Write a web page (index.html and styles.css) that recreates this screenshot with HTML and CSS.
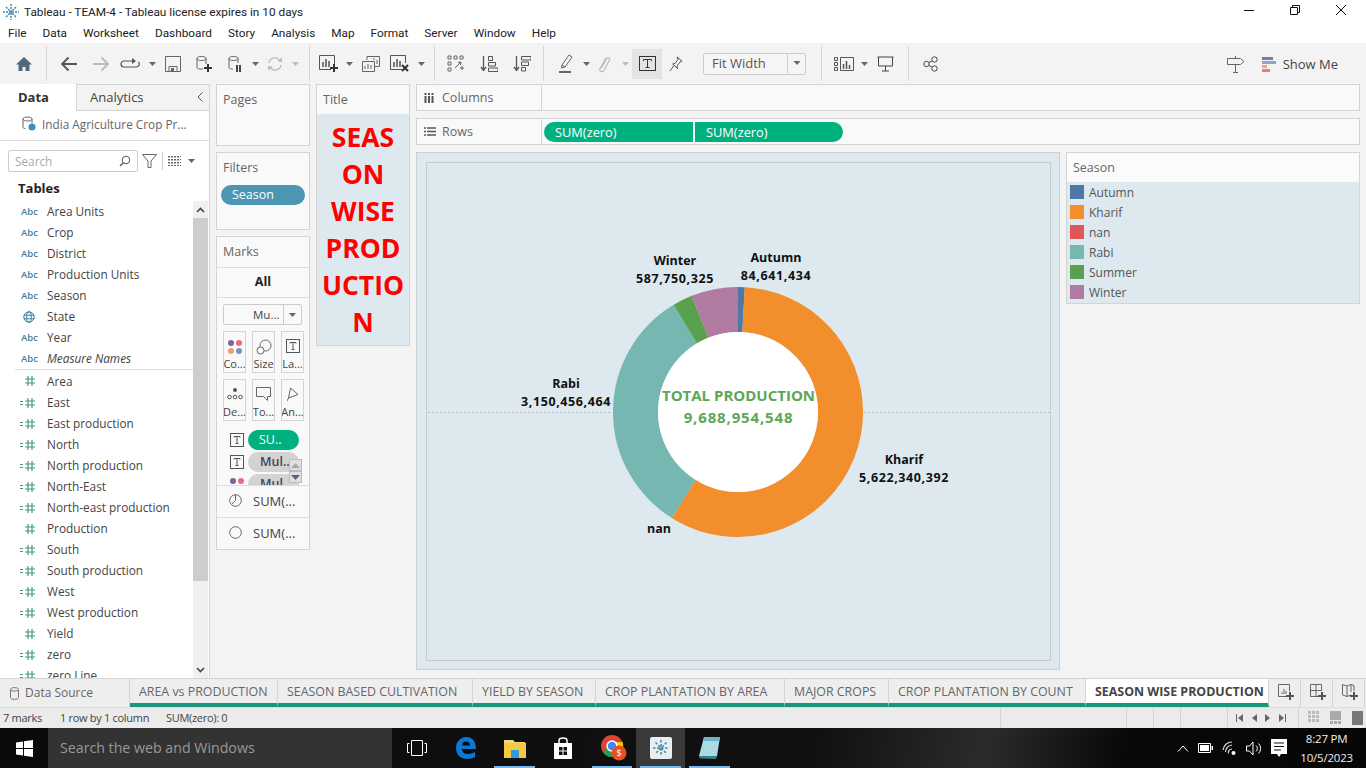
FILE: index.html
```html
<!DOCTYPE html>
<html lang="en">
<head>
  <meta charset="UTF-8" />
  <title>Tableau - TEAM-4</title>
  <link rel="stylesheet" href="styles.css">
</head>
<body>
  <!-- shared icons -->
  <svg class="defs" width="0" height="0">
    <symbol id="i-hash" viewBox="0 0 12 12"><path d="M4 1v10M8 1v10M1 4h10M1 8h10" fill="none" stroke="#3f9c78" stroke-width="1.2"/></symbol>
    <symbol id="i-calc" viewBox="0 0 16 12"><path d="M8 1v10M12 1v10M5 4h10M5 8h10M0 4.500h3M0 7.500h3" fill="none" stroke="#3f9c78" stroke-width="1.2"/></symbol>
    <symbol id="i-caret" viewBox="0 0 7 4"><path d="M0 0h7L3.500 4z" fill="#666"/></symbol>
    <symbol id="i-caret-off" viewBox="0 0 7 4"><path d="M0 0h7L3.500 4z" fill="#bbb"/></symbol>
    <symbol id="i-t" viewBox="0 0 14 14"><rect x=".5" y=".5" width="13" height="13" fill="none" stroke="#555"/><path d="M4 4.500V3.500h6v1M7 3.500v7M5.500 10.500h3" fill="none" stroke="#555"/></symbol>
  </svg>

  <header class="titlebar">
    <svg class="app-logo" width="16" height="16" viewBox="0 0 16 16"><path d="M8 0v16M0 8h16M3 3l10 10M13 3L3 13" stroke="#4b86ad" stroke-width="1.500" stroke-dasharray="2 1"/></svg>
    <span>Tableau - TEAM-4 - Tableau license expires in 10 days</span>
    <div class="win-btns">
      <svg width="12" height="12" viewBox="0 0 12 12"><path d="M1 6.500h10" stroke="#111"/></svg>
      <svg width="12" height="12" viewBox="0 0 12 12"><path d="M1.500 3.500h7v7h-7zM3.500 3.500v-2h7v7h-2" fill="none" stroke="#111"/></svg>
      <svg width="12" height="12" viewBox="0 0 12 12"><path d="M1 1l10 10M11 1L1 11" stroke="#111"/></svg>
    </div>
  </header>

  <nav class="menubar">
    <span>File</span><span>Data</span><span>Worksheet</span><span>Dashboard</span><span>Story</span><span>Analysis</span><span>Map</span><span>Format</span><span>Server</span><span>Window</span><span>Help</span>
  </nav>

  <div class="toolbar">
    <div class="tool w32"><svg width="18" height="16" viewBox="0 0 18 16"><path d="M9 1L1 8.500h2.500V15h4v-4h3v4h4V8.500H17z" fill="#54687c"/></svg></div>
    <i class="sep"></i>
    <div class="tool w32"><svg width="18" height="16" viewBox="0 0 18 16"><path d="M17 8H2M8.500 1.500L2 8l6.500 6.500" fill="none" stroke="#555" stroke-width="1.800"/></svg></div>
    <div class="tool w32"><svg width="18" height="16" viewBox="0 0 18 16"><path d="M1 8h15M9.500 1.500L16 8l-6.500 6.500" fill="none" stroke="#bbb" stroke-width="1.800"/></svg></div>
    <div class="tool w26"><svg width="20" height="12" viewBox="0 0 20 12"><path d="M14 3H4a3 3 0 0 0 0 6h12a3 3 0 0 0 2.500-5" fill="none" stroke="#555" stroke-width="1.200"/><path d="M12 0l4 3-4 3z" fill="#555"/></svg></div>
    <div class="tool w18"><svg width="7" height="4"><use href="#i-caret"/></svg></div>
    <div class="tool w24"><svg width="16" height="16" viewBox="0 0 16 16"><path d="M.5.500h15v15H.5zM4 15.500v-5h8v5" fill="none" stroke="#666"/><path d="M6 12h3v3H6z" fill="#666"/></svg></div>
    <div class="tool w38"><svg width="16" height="17" viewBox="0 0 16 17"><path d="M1 3.500v9c0 1 1.200 1.500 3 1.500h3M10 3.500V9M1 3.500C1 2 3 1.500 5.500 1.500S10 2 10 3.500 8 5.500 5.500 5.500 1 5 1 3.500z" fill="none" stroke="#666"/><path d="M11 9v3H8v2h3v3h2v-3h3v-2h-3V9z" fill="#333"/></svg></div>
    <div class="tool w24"><svg width="14" height="17" viewBox="0 0 14 17"><path d="M1 3.500v9c0 1 1.200 1.500 3 1.500h1M10 3.500V8M1 3.500C1 2 3 1.500 5.500 1.500S10 2 10 3.500 8 5.500 5.500 5.500 1 5 1 3.500z" fill="none" stroke="#666"/><path d="M8 10h2v7H8zM11 10h2v7h-2z" fill="#444"/></svg></div>
    <div class="tool w16"><svg width="7" height="4"><use href="#i-caret"/></svg></div>
    <div class="tool w24"><svg width="16" height="16" viewBox="0 0 16 16"><path d="M2 7a6 6 0 0 1 10.500-3M14 9a6 6 0 0 1-10.500 3" fill="none" stroke="#bbb" stroke-width="1.400"/><path d="M10.500 5.500L15 6V1.500zM5.500 10.500L1 10v4.500z" fill="#bbb"/></svg></div>
    <div class="tool w16"><svg width="7" height="4"><use href="#i-caret-off"/></svg></div>
    <i class="sep"></i>
    <div class="tool w26"><svg width="20" height="17" viewBox="0 0 20 17"><path d="M12 14.500H.5V.5h15V9" fill="none" stroke="#555"/><path d="M4 7v5M7 4v8M10 6v6" stroke="#555" stroke-width="1.500"/><path d="M14 9v3h-3v2h3v3h2v-3h3v-2h-3V9z" fill="#333"/></svg></div>
    <div class="tool w14"><svg width="7" height="4"><use href="#i-caret"/></svg></div>
    <div class="tool w30"><svg width="18" height="16" viewBox="0 0 18 16"><path d="M5 4V.5h12.500v10H13M.5 5.500h12v10H.5z" fill="#f3f3f3" stroke="#666"/><path d="M3 13v-3M6 13V8M9 13v-4M12 4V2M15 8V4" stroke="#666"/></svg></div>
    <div class="tool w28"><svg width="20" height="17" viewBox="0 0 20 17"><path d="M12 14.500H.5V.5h15V8" fill="none" stroke="#555"/><path d="M4 7v5M7 4v8M10 6v6" stroke="#555" stroke-width="1.500"/><path d="M12 10l6 6M18 10l-6 6" stroke="#333" stroke-width="2"/></svg></div>
    <div class="tool w14"><svg width="7" height="4"><use href="#i-caret"/></svg></div>
    <i class="sep"></i>
    <div class="tool w30"><svg width="18" height="17" viewBox="0 0 18 17"><path d="M1 1h3v3H1zM7 1h3v3H7zM1 7h3v3H1zM1 13h3v3H1zM13 1h3v3h-3z" fill="none" stroke="#666"/><path d="M8 13l6-6M14 7l-3 .5M14 7l-.5 3M13 13h4M15 11v4" fill="none" stroke="#666"/></svg></div>
    <div class="tool w36"><svg width="18" height="18" viewBox="0 0 18 18"><path d="M3.500 1v14M1 12l2.500 3.500L6 12" fill="none" stroke="#555" stroke-width="1.300"/><path d="M8.500 1.500h4v4h-4zM8.500 7.500h7v3.500h-7zM8.500 13h9.500v3.500H8.500z" fill="none" stroke="#555"/></svg></div>
    <div class="tool w30"><svg width="18" height="18" viewBox="0 0 18 18"><path d="M3.500 1v14M1 12l2.500 3.500L6 12" fill="none" stroke="#555" stroke-width="1.300"/><path d="M8.500 1.500H18V5H8.500zM8.500 7h7v3.500h-7zM8.500 12.500h4v3.500h-4z" fill="none" stroke="#555"/></svg></div>
    <i class="sep"></i>
    <div class="tool w32"><svg width="14" height="19" viewBox="0 0 14 19"><path d="M3 11l7-10 3 2-7 10-3.500 1z" fill="none" stroke="#666"/><path d="M3 11l3 2" stroke="#666"/><path d="M0 17h12v2H0z" fill="#666"/></svg></div>
    <div class="tool w8"><svg width="7" height="4"><use href="#i-caret"/></svg></div>
    <div class="tool w28"><svg width="13" height="18" viewBox="0 0 13 18"><path d="M3.500 13L8.500 3.500c1-2 4-.5 3 1.500L6 15.500c-1.500 2.500-5.500.5-4-2L8 3" fill="none" stroke="#bbb" stroke-width="1.200"/></svg></div>
    <div class="tool w14"><svg width="7" height="4"><use href="#i-caret-off"/></svg></div>
    <div class="tool w30 active"><svg width="17" height="15" viewBox="0 0 17 15"><rect x=".5" y=".5" width="16" height="14" fill="none" stroke="#333"/><path d="M4.500 5V3.500h8V5M8.500 3.500v8M6.500 11.500h4" fill="none" stroke="#333"/></svg></div>
    <div class="tool w28"><svg width="14" height="16" viewBox="0 0 14 16"><path d="M8 1l5 4-2 1-3 4 .5 2.500L3.500 8 6 7.500l3-4zM4.500 10L1 15" fill="none" stroke="#555"/></svg></div>
    <div class="fit-select"><span>Fit Width</span><b><svg width="8" height="4"><use href="#i-caret"/></svg></b></div>
    <i class="sep"></i>
    <div class="tool w32"><svg width="20" height="14" viewBox="0 0 20 14"><path d="M.5.500h3v3h-3zM.5 5.500h3v3h-3zM.5 10.500h3v3h-3zM6.500.500h13v13h-13z" fill="none" stroke="#555"/><path d="M9.500 7v5M12.500 4v8M15.500 8v4" stroke="#555" stroke-width="1.500"/></svg></div>
    <div class="tool w8"><svg width="7" height="4"><use href="#i-caret"/></svg></div>
    <div class="tool w34"><svg width="17" height="16" viewBox="0 0 17 16"><path d="M.5 1h16M1.500 1v9h14V1M8.500 10v5M5 15h7" fill="none" stroke="#444"/></svg></div>
    <i class="sep"></i>
    <div class="tool w30"><svg width="15" height="16" viewBox="0 0 15 16"><circle cx="3.500" cy="8" r="2.700" fill="none" stroke="#444"/><circle cx="11.500" cy="3.500" r="2.700" fill="none" stroke="#444"/><circle cx="11.500" cy="12.500" r="2.700" fill="none" stroke="#444"/><path d="M6 6.600l3-1.700M6 9.400l3 1.700" stroke="#444"/></svg></div>
    <div class="toolbar-right">
      <svg width="18" height="18" viewBox="0 0 18 18"><path d="M.5 3.500h13l3.500 3-3.500 3H.5zM8.500 1v2.500M8.500 9.500V17M6 17.500h5" fill="none" stroke="#666"/></svg>
      <div class="show-me">
        <svg width="15" height="16" viewBox="0 0 15 16"><path d="M0 1h11v3H0z" fill="#8a77a0"/><path d="M0 5h14v3H0z" fill="#86a8cf"/><path d="M0 9h5v3H0z" fill="#f2a873"/><path d="M0 13h8v3H0z" fill="#f0747e"/></svg>
        <span>Show Me</span>
      </div>
    </div>
  </div>

  <main class="workspace">
    <aside class="data-pane">
      <div class="pane-tabs">
        <div class="pane-tab current">Data</div>
        <div class="pane-tab">Analytics<svg width="6" height="10" viewBox="0 0 6 10"><path d="M5.500.5L1 5l4.500 4.500" fill="none" stroke="#555"/></svg></div>
      </div>
      <div class="source-row">
        <svg width="14" height="15" viewBox="0 0 14 15"><path d="M1 3v8c0 1 1 1.500 2.500 1.500M10 3v4M1 3c0-1.300 2-2 4.500-2S10 1.700 10 3 8 5 5.500 5 1 4.300 1 3z" fill="none" stroke="#666"/><circle cx="10" cy="11" r="3.500" fill="#3e8fb8"/></svg>
        <span>India Agriculture Crop Pr...</span>
      </div>
      <div class="search-row">
        <div class="search-box"><span>Search</span><svg width="12" height="12" viewBox="0 0 12 12"><circle cx="7" cy="5" r="3.800" fill="none" stroke="#555"/><path d="M4.300 7.700L1 11" stroke="#555" stroke-width="1.300"/></svg></div>
        <svg width="15" height="14" viewBox="0 0 15 14"><path d="M.5.500h14L9 7v6.500H6V7z" fill="none" stroke="#666"/></svg>
        <i class="search-sep"></i>
        <svg width="13" height="10" viewBox="0 0 13 10"><path d="M0 .5h13M0 3.500h13M0 6.500h13M0 9.500h13M1 0v10M4 0v10M7 0v10M10 0v10" stroke="#666" stroke-dasharray="2 1"/></svg>
        <svg class="search-caret" width="7" height="4"><use href="#i-caret"/></svg>
      </div>
      <h2 class="tables-head">Tables</h2>
      <div class="field-area">
        <ul class="field-list">
          <li><em class="abc">Abc</em>Area Units</li>
          <li><em class="abc">Abc</em>Crop</li>
          <li><em class="abc">Abc</em>District</li>
          <li><em class="abc">Abc</em>Production Units</li>
          <li><em class="abc">Abc</em>Season</li>
          <li><em class="abc globe"><svg width="12" height="12" viewBox="0 0 12 12"><g fill="none" stroke="#3e7fa0"><circle cx="6" cy="6" r="5.200"/><ellipse cx="6" cy="6" rx="2.300" ry="5.200"/><path d="M.8 4.200h10.400M.8 7.800h10.400"/></g></svg></em>State</li>
          <li><em class="abc">Abc</em>Year</li>
          <li class="italic"><em class="abc">Abc</em>Measure Names</li>
          <li class="divided"><em class="num plain"><svg width="12" height="12"><use href="#i-hash"/></svg></em>Area</li>
          <li><em class="num"><svg width="16" height="12"><use href="#i-calc"/></svg></em>East</li>
          <li><em class="num"><svg width="16" height="12"><use href="#i-calc"/></svg></em>East production</li>
          <li><em class="num"><svg width="16" height="12"><use href="#i-calc"/></svg></em>North</li>
          <li><em class="num"><svg width="16" height="12"><use href="#i-calc"/></svg></em>North production</li>
          <li><em class="num"><svg width="16" height="12"><use href="#i-calc"/></svg></em>North-East</li>
          <li><em class="num"><svg width="16" height="12"><use href="#i-calc"/></svg></em>North-east production</li>
          <li><em class="num plain"><svg width="12" height="12"><use href="#i-hash"/></svg></em>Production</li>
          <li><em class="num"><svg width="16" height="12"><use href="#i-calc"/></svg></em>South</li>
          <li><em class="num"><svg width="16" height="12"><use href="#i-calc"/></svg></em>South production</li>
          <li><em class="num"><svg width="16" height="12"><use href="#i-calc"/></svg></em>West</li>
          <li><em class="num"><svg width="16" height="12"><use href="#i-calc"/></svg></em>West production</li>
          <li><em class="num plain"><svg width="12" height="12"><use href="#i-hash"/></svg></em>Yield</li>
          <li><em class="num"><svg width="16" height="12"><use href="#i-calc"/></svg></em>zero</li>
          <li><em class="num"><svg width="16" height="12"><use href="#i-calc"/></svg></em>zero Line</li>
        </ul>
        <div class="scrollbar">
          <div class="scroll-arrow"><svg width="9" height="6" viewBox="0 0 9 6"><path d="M1 5l3.500-3.500L8 5" fill="none" stroke="#444" stroke-width="1.600"/></svg></div>
          <div class="scroll-thumb"></div>
          <div class="scroll-track"></div>
          <div class="scroll-arrow"><svg width="9" height="6" viewBox="0 0 9 6"><path d="M1 1l3.500 3.500L8 1" fill="none" stroke="#444" stroke-width="1.600"/></svg></div>
        </div>
      </div>
    </aside>

    <section class="cards">
      <div class="card pages"><div class="card-head">Pages</div></div>
      <div class="card filters">
        <div class="card-head">Filters</div>
        <div class="filter-pill">Season</div>
      </div>
      <div class="card marks">
        <div class="card-head">Marks</div>
        <div class="marks-all">All</div>
        <div class="marks-body">
          <div class="mark-type"><span>Mu...</span><b><svg width="7" height="4"><use href="#i-caret"/></svg></b></div>
          <div class="mark-grid">
            <div class="mark-btn"><svg width="16" height="16" viewBox="0 0 16 16"><circle cx="4" cy="4" r="3" fill="#7b6496"/><circle cx="12" cy="4" r="3" fill="#ef6a80"/><circle cx="4" cy="12" r="3" fill="#ef9e6b"/><circle cx="12" cy="12" r="3" fill="#6f96c4"/></svg><span>Co...</span></div>
            <div class="mark-btn"><svg width="16" height="16" viewBox="0 0 16 16"><circle cx="9.500" cy="6.500" r="5.500" fill="none" stroke="#666"/><circle cx="4.500" cy="11.500" r="3.500" fill="#f9f9f9" stroke="#666"/></svg><span>Size</span></div>
            <div class="mark-btn"><svg width="14" height="14"><use href="#i-t"/></svg><span>La...</span></div>
            <div class="mark-btn"><svg width="16" height="14" viewBox="0 0 16 14"><circle cx="8" cy="3" r="2" fill="#555"/><g fill="none" stroke="#555"><circle cx="2.500" cy="10" r="1.800"/><circle cx="8" cy="10" r="1.800"/><circle cx="13.500" cy="10" r="1.800"/></g></svg><span>De...</span></div>
            <div class="mark-btn"><svg width="15" height="14" viewBox="0 0 15 14"><path d="M.5.500h14v9h-3v4l-4-4h-7z" fill="none" stroke="#666"/></svg><span>To...</span></div>
            <div class="mark-btn"><svg width="12" height="14" viewBox="0 0 12 14"><path d="M3.500 1L11 7.500 1.500 11zM1.500 11L0 14" fill="none" stroke="#666"/></svg><span>An...</span></div>
          </div>
          <div class="mark-pills">
            <div class="pill-row"><svg width="14" height="14"><use href="#i-t"/></svg><span class="pill green">SU..</span></div>
            <div class="pill-row"><svg width="14" height="14"><use href="#i-t"/></svg><span class="pill grey">Mul..</span></div>
            <div class="pill-row"><svg width="14" height="14" viewBox="0 0 14 14"><circle cx="3" cy="4" r="3" fill="#7b6496"/><circle cx="11" cy="4" r="3" fill="#ef6a80"/></svg><span class="pill grey">Mul..</span></div>
            <div class="pill-scroll">
              <span><svg width="9" height="5" viewBox="0 0 9 5"><path d="M0 5h9L4.500 0z" fill="#aaa"/></svg></span>
              <span><svg width="9" height="5" viewBox="0 0 9 5"><path d="M0 0h9L4.500 5z" fill="#56647c"/></svg></span>
            </div>
          </div>
        </div>
        <div class="mark-sum"><svg width="13" height="13" viewBox="0 0 13 13"><circle cx="6.500" cy="6.500" r="5.800" fill="none" stroke="#666"/><path d="M6.500 6.500V.7M6.500 6.500L3 10" stroke="#666" fill="none"/></svg><span>SUM(...</span></div>
        <div class="mark-sum"><svg width="13" height="13" viewBox="0 0 13 13"><circle cx="6.500" cy="6.500" r="5.800" fill="none" stroke="#666"/></svg><span>SUM(...</span></div>
      </div>
    </section>

    <section class="title-card">
      <div class="card-head">Title</div>
      <div class="title-body">SEAS<br>ON<br>WISE<br>PROD<br>UCTIO<br>N</div>
    </section>

    <section class="view">
      <div class="shelf">
        <div class="shelf-label"><svg width="12" height="10" viewBox="0 0 12 10"><path d="M1.500 0v2M1.500 3v7M5 0v2M5 3v7M8.500 0v2M8.500 3v7" stroke="#555" stroke-width="2"/></svg>Columns</div>
      </div>
      <div class="shelf">
        <div class="shelf-label"><svg width="12" height="9" viewBox="0 0 12 9"><path d="M0 1h2M3 1h9M0 4.500h2M3 4.500h9M0 8h2M3 8h9" stroke="#555" stroke-width="1.500"/></svg>Rows</div>
        <div class="shelf-pills"><span class="shelf-pill">SUM(zero)</span><span class="shelf-pill">SUM(zero)</span></div>
      </div>
      <div class="view-row">
        <div class="canvas">
          <div class="canvas-frame">
            <svg class="chart" viewBox="427 163 623 497">
              <path d="M428 412.500H612M864 412.500H1050" stroke="#b9b9b9" stroke-dasharray="2 2"/>
              <g fill="none" stroke-width="45" transform="rotate(-90 738 412)">
                <circle cx="738" cy="412" r="102.500" stroke="#4e79a7" pathLength="360" stroke-dasharray="3.200 360"/>
                <circle cx="738" cy="412" r="102.500" stroke="#f28e2b" pathLength="360" stroke-dasharray="208.900 360" stroke-dashoffset="-3.140"/>
                <circle cx="738" cy="412" r="102.500" stroke="#76b7b2" pathLength="360" stroke-dasharray="117.200 360" stroke-dashoffset="-212"/>
                <circle cx="738" cy="412" r="102.500" stroke="#59a14f" pathLength="360" stroke-dasharray="9.200 360" stroke-dashoffset="-329.100"/>
                <circle cx="738" cy="412" r="102.500" stroke="#b07aa1" pathLength="360" stroke-dasharray="21.700 360" stroke-dashoffset="-338.300"/>
              </g>
              <circle cx="738" cy="412" r="80" fill="#fff"/>
              <g class="chart-label">
                <text x="776" y="262">Autumn</text><text class="val" x="776" y="280">84,641,434</text>
                <text x="675" y="265">Winter</text><text class="val" x="675" y="283">587,750,325</text>
                <text x="566" y="388">Rabi</text><text class="val" x="566" y="406">3,150,456,464</text>
                <text x="904" y="464">Kharif</text><text class="val" x="904" y="482">5,622,340,392</text>
                <text x="659" y="533">nan</text>
              </g>
              <g class="chart-total">
                <text x="738.500" y="401">TOTAL PRODUCTION</text>
                <text class="val" x="738.500" y="423">9,688,954,548</text>
              </g>
            </svg>
          </div>
        </div>
        <div class="legend">
          <div class="card-head">Season</div>
          <ul class="legend-list">
            <li><i class="c-autumn"></i>Autumn</li>
            <li><i class="c-kharif"></i>Kharif</li>
            <li><i class="c-nan"></i>nan</li>
            <li><i class="c-rabi"></i>Rabi</li>
            <li><i class="c-summer"></i>Summer</li>
            <li><i class="c-winter"></i>Winter</li>
          </ul>
        </div>
      </div>
    </section>
  </main>

  <div class="tabbar">
    <div class="tab source"><svg width="9" height="13" viewBox="0 0 9 13"><path d="M.5 2.500v8c0 2.500 8 2.500 8 0v-8c0-2.500-8-2.500-8 0zM.5 2.500c0 2 8 2 8 0" fill="none" stroke="#777"/></svg>Data Source</div>
    <div class="tab t1">AREA vs PRODUCTION</div>
    <div class="tab t2">SEASON BASED CULTIVATION</div>
    <div class="tab t3">YIELD BY SEASON</div>
    <div class="tab t4">CROP PLANTATION BY AREA</div>
    <div class="tab t5">MAJOR CROPS</div>
    <div class="tab t6">CROP PLANTATION BY COUNT</div>
    <div class="tab t7 current">SEASON WISE PRODUCTION</div>
    <div class="tab-add"><svg width="16" height="16" viewBox="0 0 16 16"><path d="M9 12.500H.5V.5h11V7" fill="none" stroke="#666"/><path d="M4 8v2M6 5v5M8 7v3" stroke="#666"/><path d="M11 8v3H8v2h3v3h2v-3h3v-2h-3V8z" fill="#555"/></svg></div>
    <div class="tab-add"><svg width="16" height="16" viewBox="0 0 16 16"><path d="M9 12.500H.5V.5h11V7M.5 6.500h11M6 .5v12" fill="none" stroke="#666"/><path d="M11 8v3H8v2h3v3h2v-3h3v-2h-3V8z" fill="#555"/></svg></div>
    <div class="tab-add"><svg width="16" height="16" viewBox="0 0 16 16"><path d="M9 11l-4 1.500-4.500-1.500V.5L5 2l4-1.500 3 1V7M5 2v10.500M9 .5V8" fill="none" stroke="#666"/><path d="M11 8v3H8v2h3v3h2v-3h3v-2h-3V8z" fill="#555"/></svg></div>
  </div>

  <footer class="statusbar">
    <span class="st-marks">7 marks</span>
    <span class="st-rows">1 row by 1 column</span>
    <span>SUM(zero): 0</span>
    <div class="st-cells">
      <i class="c1"></i><i class="c2"></i><i class="c3"></i><i class="c4"></i>
      <div class="st-nav">
        <svg width="7" height="8" viewBox="0 0 7 8"><path d="M0 0h1v8H0zM7 0v8L2 4z" fill="#666"/></svg>
        <svg width="5" height="8" viewBox="0 0 5 8"><path d="M5 0v8L0 4z" fill="#666"/></svg>
        <svg width="5" height="8" viewBox="0 0 5 8"><path d="M0 0v8l5-4z" fill="#666"/></svg>
        <svg width="7" height="8" viewBox="0 0 7 8"><path d="M0 0v8l5-4zM6 0h1v8H6z" fill="#666"/></svg>
      </div>
      <div class="st-views">
        <svg width="11" height="14" viewBox="0 0 11 14"><path d="M0 0h3v3H0zM4 0h3v3H4zM8 0h3v3H8zM0 4h3v3H0zM4 4h3v3H4zM8 4h3v3H8zM0 8h3v3H0zM4 8h3v3H4zM8 8h3v3H8z" fill="#bbb"/></svg>
        <svg width="11" height="14" viewBox="0 0 11 14"><path d="M0 0h11v9H0zM0 10h3v3H0zM4 10h3v3H4zM8 10h3v3H8z" fill="#aaa"/></svg>
        <svg width="11" height="14" viewBox="0 0 11 14"><path d="M0 0h11v14H0z" fill="#777"/></svg>
      </div>
    </div>
  </footer>

  <div class="taskbar">
    <div class="start"><svg width="17" height="17" viewBox="0 0 17 17"><path d="M0 2.500l7-1V8H0zM8 1.300l9-1.300V8H8zM0 9h7v6.500l-7-1zM8 9h9v8l-9-1.300z" fill="#fff"/></svg></div>
    <div class="task-search">Search the web and Windows</div>
    <div class="task-icons">
      <div class="task-icon"><svg width="20" height="16" viewBox="0 0 20 16"><path d="M4.500.5h11v15h-11zM2.500 3.500H.5v9h2M17.500 3.500h2v9h-2" fill="none" stroke="#fff"/></svg></div>
      <div class="task-icon"><svg width="22" height="22" viewBox="0 0 22 22"><path d="M1 11C1 4 6 0 11.500 0 18 0 21 5 21 12H7c0 3 2.500 5 6 5 2.500 0 5-.8 7-2v5c-2 1.300-5 2-8 2-6 0-11-4-11-11zM7 8.500h8c0-2.500-1.500-4-4-4S7.300 6 7 8.500z" fill="#0a78d4"/></svg></div>
      <div class="task-icon open"><svg width="22" height="20" viewBox="0 0 22 20"><path d="M0 2h9l2 2h10v4H0z" fill="#f2d774"/><path d="M0 5h22v15H0z" fill="#f5c842"/><path d="M7 12h8v8H7z" fill="#2f9bd8"/></svg></div>
      <div class="task-icon"><svg width="20" height="23" viewBox="0 0 20 23"><path d="M6 6V3.500C6 2 8 1 10 1s4 1 4 2.500V6" fill="none" stroke="#fff" stroke-width="1.500"/><path d="M1 6h18v16H1z" fill="#fff"/><path d="M6 10h3.500v3.500H6zM10.500 10H14v3.500h-3.500zM6 14.500h3.500V18H6zM10.500 14.500H14V18h-3.500z" fill="#111"/></svg></div>
      <div class="task-icon open chrome"><svg width="26" height="26" viewBox="0 0 26 26"><circle cx="11" cy="11" r="11" fill="#db4437"/><path d="M11 11L1.500 16.500A11 11 0 0 0 14 21.500z" fill="#2a9d4a"/><path d="M11 11l3 10.500A11 11 0 0 0 21.500 7H11z" fill="#f4c20d"/><circle cx="11" cy="11" r="5" fill="#4285f4" stroke="#fff" stroke-width="1.500"/><circle cx="18" cy="18" r="7.500" fill="#e8501f"/><text x="18" y="21" class="badge-text">$</text></svg></div>
      <div class="task-icon active open"><svg width="22" height="22" viewBox="0 0 22 22"><rect width="22" height="22" rx="2" fill="#e8eef2"/><path d="M11 3v16M3 11h16M5.500 5.500l11 11M16.500 5.500l-11 11" stroke="#4b86ad" stroke-width="1.600" stroke-dasharray="2.500 1.500"/></svg></div>
      <div class="task-icon open"><svg width="22" height="24" viewBox="0 0 22 24"><path d="M6 1h16l-3 19H1z" fill="#a8dbe6"/><path d="M6 1h16l-.6 4H5.300z" fill="#6fb3c6"/><path d="M1 20l18 0-1 3-16-.5z" fill="#3e7d8c"/></svg></div>
    </div>
    <div class="tray">
      <svg width="12" height="7" viewBox="0 0 12 7"><path d="M1 6.500L6 1l5 5.500" fill="none" stroke="#fff"/></svg>
      <svg width="15" height="10" viewBox="0 0 15 10"><path d="M.5.500h12v9H.5z" fill="none" stroke="#fff"/><path d="M2 2h9v6H2zM13.500 3H15v4h-1.500z" fill="#fff"/></svg>
      <svg width="15" height="14" viewBox="0 0 15 14"><path d="M1 9a9 9 0 0 1 9-8M3.500 11a7 7 0 0 1 6.500-7M6.500 12.500A3.500 3.500 0 0 1 10 8" fill="none" stroke="#ddd" stroke-width="1.200"/><circle cx="11.500" cy="12" r="2" fill="#fff"/></svg>
      <svg width="16" height="15" viewBox="0 0 16 15"><path d="M.5 5h3l3.500-4v13l-3.500-4h-3zM10 4.500a4 4 0 0 1 0 6M12.500 2.500a7 7 0 0 1 0 10" fill="none" stroke="#fff"/></svg>
      <svg width="16" height="19" viewBox="0 0 16 19"><path d="M0 0h16v15H10l-2 3-2-3H0z" fill="#fff"/><path d="M3 4h10M3 7.500h10M3 11h7" stroke="#111"/></svg>
      <div class="clock"><span>8:27 PM</span><span>10/5/2023</span></div>
    </div>
  </div>
</body>
</html>
```

FILE: styles.css
```css
* {
  box-sizing: border-box;
}

html, body {
  margin: 0;
  height: 768px;
  overflow: hidden;
}

body {
  font-family: "Open Sans", "Noto Sans", sans-serif;
  font-size: 12.500px;
  color: #444;
  background: #f3f3f3;
  display: flex;
  flex-direction: column;
}

ul {
  list-style: none;
  margin: 0;
  padding: 0;
}

.defs {
  position: absolute;
}

svg {
  display: block;
  flex: none;
}

/* window chrome */
.titlebar {
  height: 24px;
  flex: none;
  background: #fff;
  color: #222;
  display: flex;
  align-items: center;
  padding: 0 0 0 3px;
  font-family: Roboto, sans-serif;
  font-size: 11.800px;
}

.app-logo {
  margin-right: 5px;
}

.win-btns {
  margin-left: auto;
  display: flex;
  gap: 34px;
  padding-right: 19px;
  margin-top: -4px;
}

.menubar {
  height: 19px;
  flex: none;
  background: #fff;
  color: #222;
  display: flex;
  gap: 16px;
  padding-left: 8px;
  font-family: Roboto, sans-serif;
  font-size: 11.800px;
  line-height: 19px;
}

/* toolbar */
.toolbar {
  height: 41px;
  flex: none;
  display: flex;
  align-items: center;
  padding-left: 8px;
  padding-right: 28px;
}

.tool {
  height: 30px;
  display: flex;
  align-items: center;
  justify-content: center;
  flex: none;
}

.tool.active {
  background: #e3e3e3;
}

.w8 { width: 8px; }
.w14 { width: 14px; }
.w16 { width: 16px; }
.w18 { width: 18px; }
.w24 { width: 24px; }
.w26 { width: 26px; }
.w28 { width: 28px; }
.w30 { width: 30px; }
.w32 { width: 32px; }
.w34 { width: 34px; }
.w36 { width: 36px; }
.w38 { width: 38px; }

.sep {
  width: 1px;
  height: 35px;
  background: #d6d6d6;
  margin: 0 6px;
  flex: none;
}

.fit-select {
  width: 103px;
  height: 22px;
  margin: 0 9px 0 13px;
  background: #f5f5f5;
  border: 1px solid #ccc;
  border-radius: 2px;
  display: flex;
  align-items: center;
  justify-content: space-between;
  padding: 0 0 1px 8px;
  font-size: 13px;
  color: #555;
}

.fit-select b {
  width: 18px;
  height: 100%;
  border-left: 1px solid #ccc;
  display: flex;
  align-items: center;
  justify-content: center;
}

.toolbar-right {
  margin-left: auto;
  display: flex;
  align-items: center;
  gap: 17px;
}

.show-me {
  display: flex;
  align-items: center;
  gap: 6px;
  font-size: 13px;
}

/* main area */
.workspace {
  height: 594px;
  flex: none;
  display: flex;
  gap: 6px;
  padding-right: 6px;
}

.data-pane {
  width: 210px;
  background: #fff;
  border-right: 1px solid #d4d4d4;
  display: flex;
  flex-direction: column;
  flex: none;
  font-size: 11.800px;
}

.pane-tabs {
  display: flex;
  height: 27px;
  flex: none;
}

.pane-tab {
  flex: 1;
  background: #f3f3f3;
  border-bottom: 1px solid #d4d4d4;
  border-top: 1px solid #d4d4d4;
  display: flex;
  align-items: center;
  justify-content: space-between;
  padding: 0 6px 2px 13px;
  font-size: 13px;
}

.pane-tab.current {
  flex: none;
  width: 77px;
  background: #fff;
  border-bottom: none;
  border-right: 1px solid #d4d4d4;
  border-top: none;
  padding-left: 18px;
  font-weight: 700;
  color: #333;
}

.source-row {
  height: 30px;
  flex: none;
  display: flex;
  align-items: center;
  gap: 6px;
  padding: 0 0 4px 22px;
  border-bottom: 1px solid #ddd;
  color: #666;
}

.search-row {
  height: 42px;
  flex: none;
  display: flex;
  align-items: center;
  padding: 0 0 2px 8px;
}

.search-box {
  width: 130px;
  height: 22px;
  border: 1px solid #ccc;
  border-radius: 2px;
  display: flex;
  align-items: center;
  justify-content: space-between;
  padding: 0 6px 0 6px;
  color: #aaa;
  margin-right: 4px;
}

.search-sep {
  width: 1px;
  height: 18px;
  background: #ccc;
  margin: 0 5px;
}

.search-caret {
  margin-left: 7px;
}

.tables-head {
  margin: -5px 0 0;
  padding-left: 18px;
  height: 23px;
  flex: none;
  font-size: 13px;
  line-height: 20px;
  font-weight: 700;
  color: #222;
}

.field-area {
  flex: 1;
  min-height: 0;
  display: flex;
  overflow: hidden;
}

.field-list {
  flex: 1;
  overflow: hidden;
}

.field-list li {
  height: 21px;
  line-height: 21px;
  display: flex;
  align-items: center;
  white-space: nowrap;
}

.field-list .italic {
  font-style: italic;
}

.field-list .divided {
  border-top: 1px solid #ddd;
  margin-left: 15px;
  padding: 1px 0;
  height: 23px;
}

.divided .num {
  margin-left: -15px;
}

.abc {
  width: 47px;
  padding-left: 21px;
  font-style: normal;
  font-size: 9.500px;
  font-weight: 600;
  color: #3e7f9e;
  flex: none;
}

.globe {
  padding-left: 23px;
}

.num {
  width: 47px;
  padding-left: 20px;
  flex: none;
}

.num.plain {
  padding-left: 24px;
}

.scrollbar {
  width: 15px;
  margin-right: 1px;
  display: flex;
  flex-direction: column;
  flex: none;
  background: #f0f0f0;
}

.scroll-arrow {
  height: 17px;
  flex: none;
  display: flex;
  align-items: center;
  justify-content: center;
}

.scroll-thumb {
  height: 363px;
  background: #cdcdcd;
  flex: none;
}

.scroll-track {
  flex: 1;
}

/* cards */
.cards {
  width: 94px;
  flex: none;
  display: flex;
  flex-direction: column;
  gap: 6px;
}

.card {
  background: #f9f9f9;
  border: 1px solid #d4d4d4;
}

.card-head {
  height: 30px;
  line-height: 30px;
  padding-left: 6px;
  color: #666;
  flex: none;
}

.pages {
  height: 62px;
}

.filters {
  height: 78px;
}

.filter-pill {
  margin: 2px 4px 0;
  height: 20px;
  line-height: 20px;
  padding-left: 11px;
  border-radius: 10px;
  background: #4a96b3;
  color: #fff;
}

.marks {
  height: 314px;
  display: flex;
  flex-direction: column;
}

.marks-all {
  height: 31px;
  line-height: 28px;
  border-top: 1px solid #ddd;
  border-bottom: 1px solid #ddd;
  text-align: center;
  font-weight: 700;
  color: #222;
  flex: none;
}

.marks-body {
  height: 187px;
  flex: none;
  padding-top: 6px;
  overflow: hidden;
}

.mark-type {
  margin: 0 7px 0 6px;
  height: 21px;
  border: 1px solid #ccc;
  border-radius: 2px;
  display: flex;
  align-items: center;
  justify-content: space-between;
  padding-left: 29px;
  font-size: 11.500px;
}

.mark-type b {
  width: 18px;
  height: 100%;
  border-left: 1px solid #ccc;
  display: flex;
  align-items: center;
  justify-content: center;
}

.mark-grid {
  margin: 6px 7px 0 6px;
  display: grid;
  grid-template-columns: repeat(3, 23px);
  grid-auto-rows: 42px;
  justify-content: space-between;
  gap: 6px;
}

.mark-btn {
  border: 1px solid #d4d4d4;
  display: flex;
  flex-direction: column;
  align-items: center;
  justify-content: space-between;
  padding: 7px 0 1px;
  font-size: 11px;
  line-height: 14px;
  overflow: hidden;
  white-space: nowrap;
}

.mark-pills {
  position: relative;
  margin-top: 9px;
  padding-left: 13px;
  display: flex;
  flex-direction: column;
  gap: 2px;
}

.pill-row {
  display: flex;
  align-items: center;
  gap: 4px;
}

.pill {
  height: 20px;
  width: 51px;
  line-height: 20px;
  padding-left: 11px;
  border-radius: 10px;
}

.pill.green {
  background: #00b180;
  color: #fff;
}

.pill.grey {
  background: #d3d3d3;
  font-weight: 600;
  color: #445;
  padding-left: 12px;
}

.pill-scroll {
  position: absolute;
  left: 72px;
  top: 29px;
  width: 13px;
  display: flex;
  flex-direction: column;
}

.pill-scroll span {
  height: 12px;
  background: #e0e0e0;
  border: 1px solid #bbb;
  display: flex;
  align-items: center;
  justify-content: center;
}

.mark-sum {
  height: 32px;
  border-top: 1px solid #ddd;
  display: flex;
  align-items: center;
  gap: 11px;
  padding: 0 0 2px 12px;
  font-size: 13px;
  flex: none;
}

.title-card {
  width: 94px;
  height: 262px;
  flex: none;
  background: #f9f9f9;
  border: 1px solid #d4d4d4;
}

.title-card .card-head {
  height: 29px;
  line-height: 30px;
}

.title-body {
  background: #dde9ef;
  height: 231px;
  text-align: center;
  color: #f00;
  font-size: 26.500px;
  font-weight: 700;
  line-height: 37px;
  padding-top: 5px;
}

/* shelves and view */
.view {
  flex: 1;
  min-width: 0;
  display: flex;
  flex-direction: column;
  gap: 7px;
}

.shelf {
  height: 27px;
  flex: none;
  display: flex;
  align-items: center;
  background: #f9f9f9;
  border: 1px solid #d4d4d4;
}

.shelf-label {
  width: 125px;
  height: 100%;
  border-right: 1px solid #d4d4d4;
  display: flex;
  align-items: center;
  gap: 6px;
  padding-left: 7px;
  color: #666;
  flex: none;
}

.shelf-pills {
  display: flex;
  gap: 2px;
  padding-left: 2px;
  font-size: 12.800px;
}

.shelf-pill {
  width: 149px;
  height: 20px;
  line-height: 20px;
  padding-left: 11px;
  background: #00b180;
  color: #fff;
}

.shelf-pill:first-child {
  border-radius: 10px 0 0 10px;
}

.shelf-pill:last-child {
  width: 148px;
  border-radius: 0 10px 10px 0;
}

.view-row {
  display: flex;
  gap: 6px;
  align-items: flex-start;
}

.canvas {
  width: 644px;
  height: 518px;
  flex: none;
  padding: 9px 8px 8px 9px;
  background: #dde9ef;
  border: 1px solid #c9d1d5;
}

.canvas-frame {
  height: 100%;
  border: 1px solid #c3ccd1;
}

.chart {
  width: 623px;
  height: 497px;
  overflow: visible;
}

.chart-label text {
  font-family: "Open Sans", sans-serif;
  font-size: 12.500px;
  font-weight: 700;
  fill: #111;
  text-anchor: middle;
}

.chart-label .val {
  letter-spacing: .6px;
}

.chart-total text {
  font-family: "Open Sans", sans-serif;
  font-size: 15px;
  font-weight: 700;
  fill: #5ca654;
  text-anchor: middle;
}

.chart-total .val {
  letter-spacing: .85px;
}

.legend {
  width: 294px;
  height: 152px;
  flex: none;
  background: #fbfbfb;
  border: 1px solid #d4d4d4;
}

.legend .card-head {
  height: 29px;
  line-height: 29px;
}

.legend-list {
  background: #dde9ef;
  height: 121px;
  padding: 0 0 0 3px;
  font-size: 12px;
}

.legend-list li {
  height: 20px;
  display: flex;
  align-items: center;
  gap: 5px;
  color: #555;
}

.legend-list i {
  width: 14px;
  height: 14px;
}

.c-autumn { background: #4e79a7; }
.c-kharif { background: #f28e2b; }
.c-nan { background: #e15759; }
.c-rabi { background: #76b7b2; }
.c-summer { background: #59a14f; }
.c-winter { background: #b07aa1; }

/* sheet tabs */
.tabbar {
  height: 29px;
  flex: none;
  display: flex;
  background: #eee;
  border-top: 1px solid #d4d4d4;
}

.tab {
  height: 28px;
  line-height: 26px;
  padding-left: 9px;
  border-right: 1px solid #d4d4d4;
  border-bottom: 4px solid #1a957e;
  color: #666;
  font-size: 12.400px;
  white-space: nowrap;
  flex: none;
}

.tab.source {
  width: 130px;
  border-bottom: none;
  display: flex;
  align-items: center;
  gap: 6px;
  padding-left: 10px;
  line-height: 28px;
  font-size: 12px;
}

.t1 { width: 148px; }
.t2 { width: 195px; }
.t3 { width: 123px; }
.t4 { width: 189px; }
.t5 { width: 104px; }
.t6 { width: 197px; }

.t7 {
  width: 183px;
}

.tab.current {
  background: #fff;
  font-weight: 700;
  color: #444;
}

.tab-add {
  width: 32px;
  height: 28px;
  border-right: 1px solid #d4d4d4;
  display: flex;
  align-items: center;
  justify-content: center;
  padding: 0 0 2px 2px;
  flex: none;
}

/* status bar */
.statusbar {
  height: 21px;
  flex: none;
  background: #ebebeb;
  display: flex;
  align-items: center;
  font-size: 11px;
  letter-spacing: -0.300px;
  color: #444;
  padding: 0 0 1px 3px;
  border-top: 1px solid #ddd;
}

.st-marks {
  width: 57px;
}

.st-rows {
  width: 106px;
}

.st-cells {
  margin-left: auto;
  height: 100%;
  display: flex;
  align-items: center;
}

.st-cells i {
  height: 100%;
  border-left: 1px solid #d4d4d4;
}

.c1 { width: 126px; }
.c2 { width: 27px; }
.c3 { width: 27px; }
.c4 { width: 47px; }

.st-nav {
  width: 71px;
  height: 100%;
  display: flex;
  align-items: center;
  justify-content: space-between;
  border-left: 1px solid #d4d4d4;
  padding: 0 12px 0 8px;
}

.st-views {
  width: 68px;
  height: 100%;
  display: flex;
  align-items: center;
  gap: 11px;
  border-left: 1px solid #d4d4d4;
  padding-left: 9px;
}

/* windows taskbar */
.taskbar {
  height: 40px;
  flex: none;
  display: flex;
  background: linear-gradient(100deg, #0a0a0a 0%, #111 60%, #2b2b2b 72%, #090909 82%, #060606 100%);
  color: #fff;
}

.start {
  width: 48px;
  display: flex;
  align-items: center;
  justify-content: center;
  flex: none;
}

.task-search {
  width: 344px;
  flex: none;
  background: #333;
  color: #999;
  font-size: 14.200px;
  line-height: 40px;
  padding-left: 12px;
}

.task-icons {
  display: flex;
  padding-left: 1px;
}

.task-icon {
  width: 48.700px;
  height: 40px;
  display: flex;
  align-items: center;
  justify-content: center;
  position: relative;
}

.task-icon.chrome svg {
  margin-left: 4px;
}

.task-icon.open::after {
  content: "";
  position: absolute;
  left: 4px;
  right: 4px;
  bottom: 0;
  height: 2px;
  background: #76b9ed;
}

.task-icon.active {
  background: #3a3a3a;
}

.badge-text {
  font-family: "Open Sans", sans-serif;
  font-size: 9px;
  fill: #fff;
  text-anchor: middle;
}

.tray {
  margin-left: auto;
  display: flex;
  align-items: center;
  gap: 9px;
  padding-right: 13px;
}

.clock {
  display: flex;
  flex-direction: column;
  align-items: center;
  font-size: 11.500px;
  line-height: 19px;
  margin-left: 4px;
  color: #eee;
  letter-spacing: -0.200px;
}
```
